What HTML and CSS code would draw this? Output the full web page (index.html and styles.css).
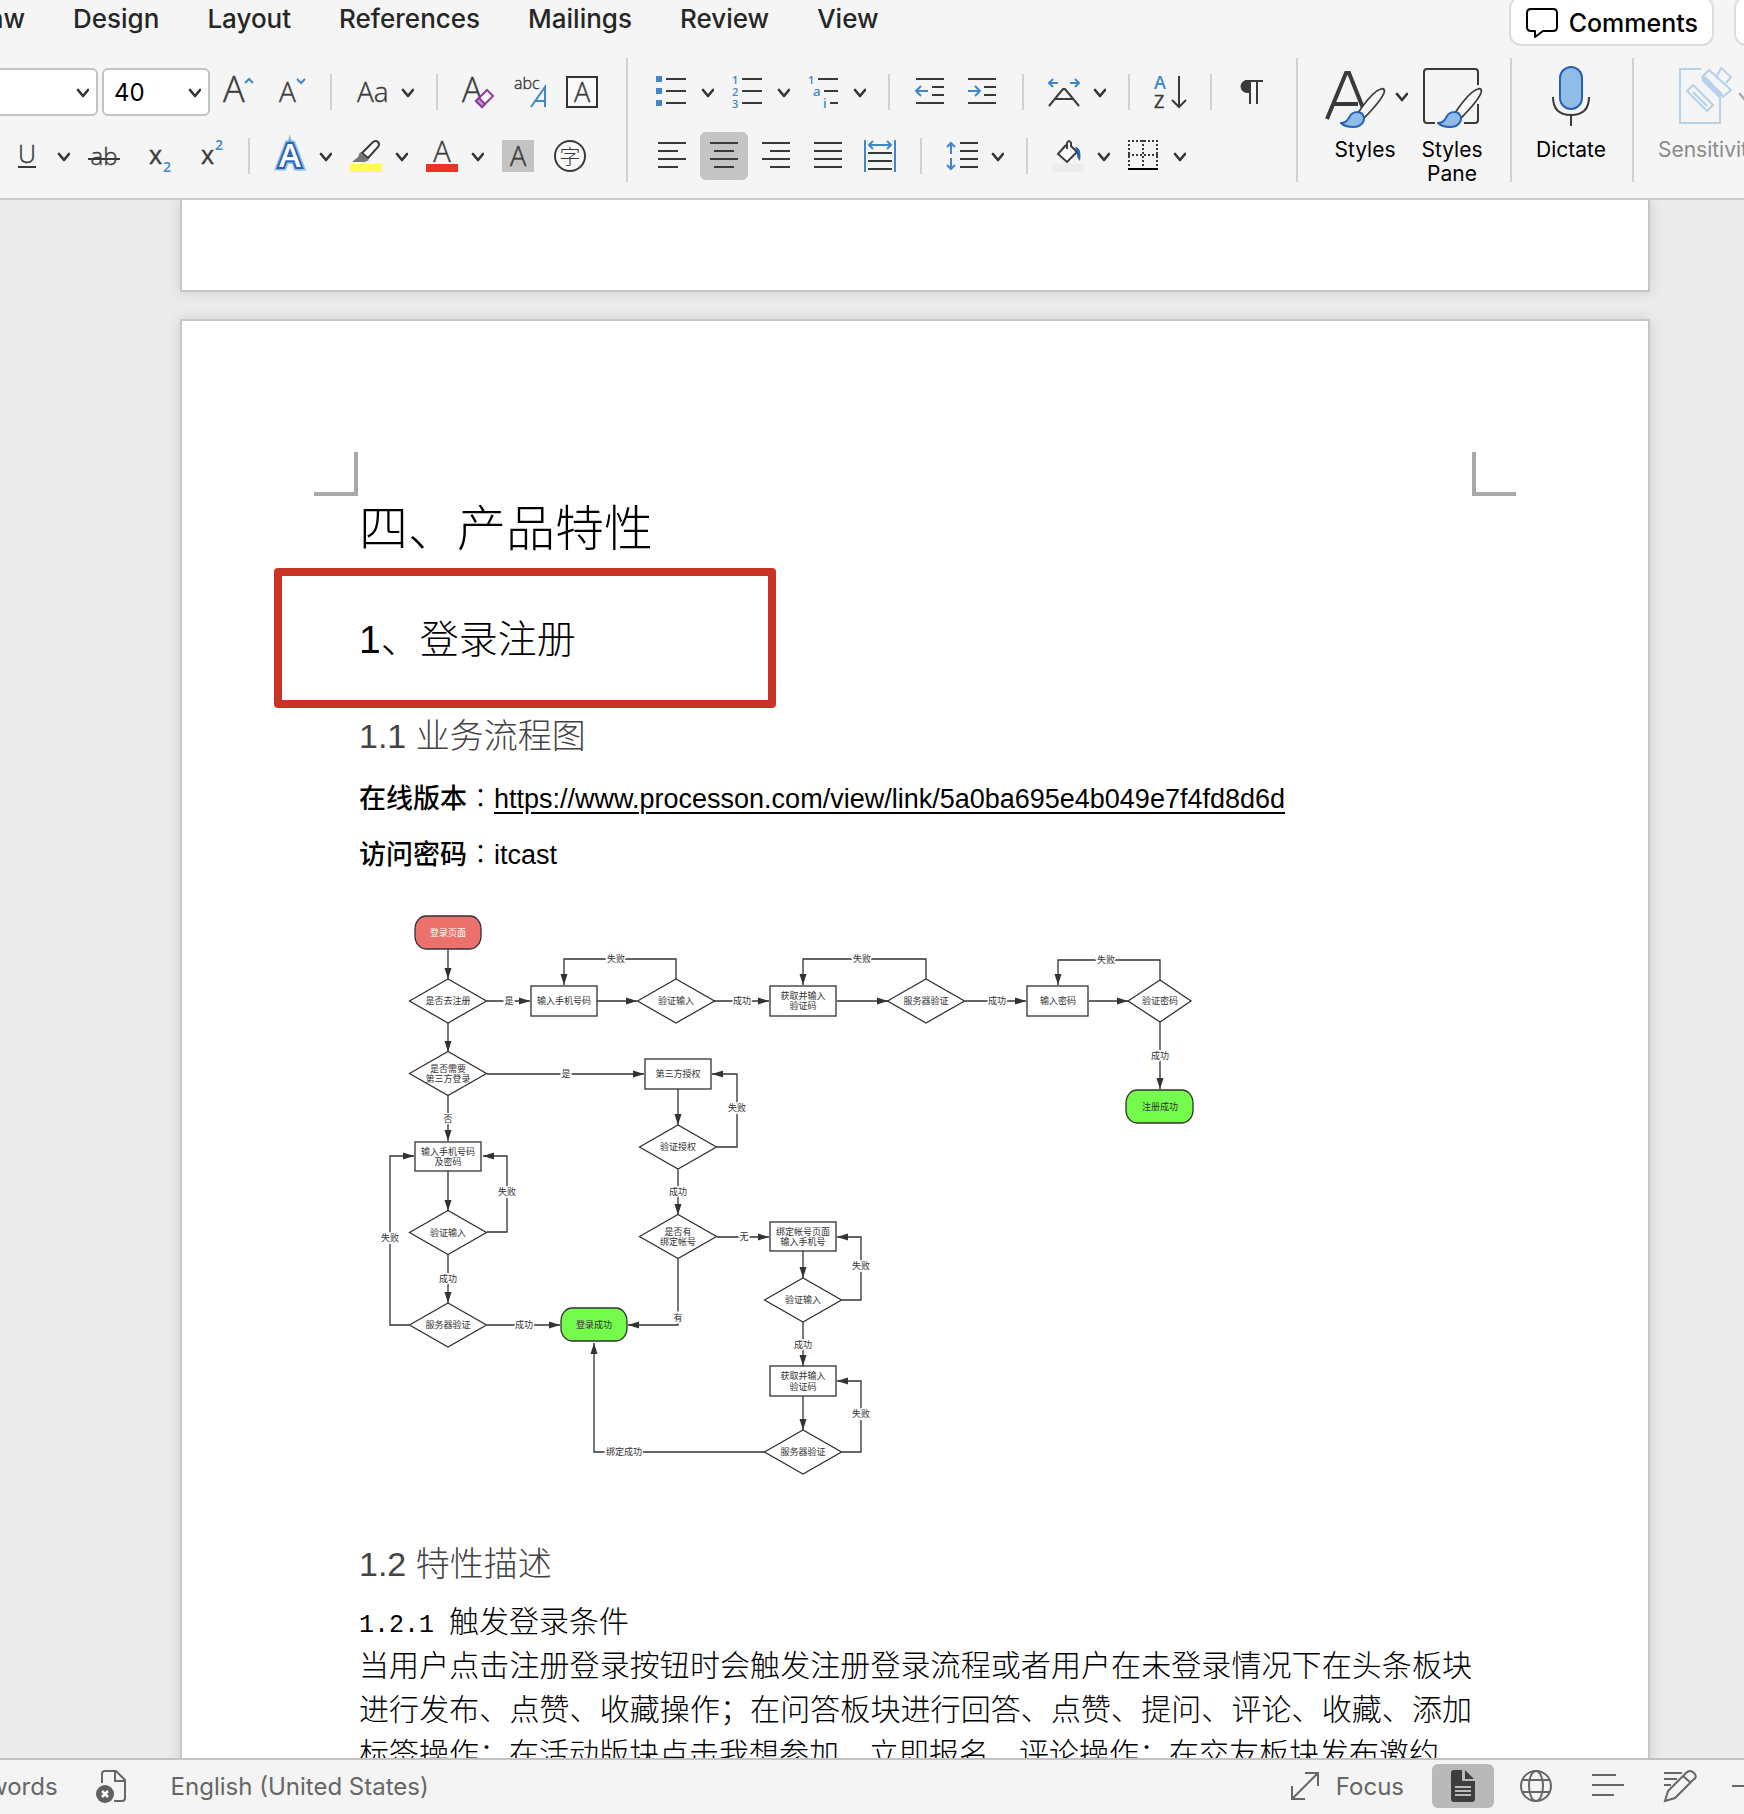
FILE: index.html
```
<!DOCTYPE html>
<html lang="en">

<head>
    <meta charset="UTF-8">
    <meta name="viewport" content="width=device-width, initial-scale=1.0">
    <title>Document</title>
    <link rel="stylesheet" href="styles.css">
</head>

<body>
    <!-- shared shapes -->
    <svg class="defs" width="0" height="0" aria-hidden="true">
        <symbol id="chevron" viewBox="0 0 18 32">
            <path d="M7 14l5 6 5-6" fill="none" stroke="currentColor" stroke-width="2.6" stroke-linecap="round" stroke-linejoin="round" />
        </symbol>
        <symbol id="brush" viewBox="0 0 46 42">
            <path d="M18 26C26 14 34 4 41 2c3-1 4 1 3 4-3 7-12 17-20 25z" fill="#fafafa" stroke="#3a3a3a" stroke-width="1.8" />
            <path d="M1 36c6 0 7-4 9-7 3-5 10-5 13-1 3 5-1 12-10 12-5 0-9-1-12-4z" fill="#90bce9" stroke="#2862b0" stroke-width="2" />
        </symbol>
    </svg>

    <header class="ribbon">
        <div class="tab-row">
            <nav class="tabs">
                <a href="#">Draw</a>
                <a href="#">Design</a>
                <a href="#">Layout</a>
                <a href="#">References</a>
                <a href="#">Mailings</a>
                <a href="#">Review</a>
                <a href="#">View</a>
            </nav>
            <div class="tab-actions">
                <button class="pill">
                    <svg width="34" height="32" viewBox="0 0 34 32" fill="none" stroke="#000" stroke-width="2" stroke-linejoin="round">
                        <path d="M6 2h22q4 0 4 4v14q0 4-4 4H18l-8 6v-6H6q-4 0-4-4V6q0-4 4-4z" />
                    </svg>
                    Comments
                </button>
                <button class="pill" aria-label="Share"></button>
            </div>
        </div>

        <div class="tools">
            <div class="group font-group">
                <div class="row">
                    <div class="combos">
                        <span class="combo font-name">
                            <select aria-label="Font"><option></option></select>
                            <svg width="18" height="32"><use href="#chevron" /></svg>
                        </span>
                        <span class="combo font-size">
                            <select aria-label="Font size"><option>40</option></select>
                            <svg width="18" height="32"><use href="#chevron" /></svg>
                        </span>
                    </div>
                    <button class="icon" aria-label="Increase font size"><svg width="32" height="32">
                        <text x="1" y="26" font-size="36" class="thin">A</text>
                        <path d="M23 7l4-4 4 4" class="blue" />
                    </svg></button>
                    <button class="icon" aria-label="Decrease font size"><svg width="32" height="32">
                        <text x="5" y="26" font-size="28" class="thin">A</text>
                        <path d="M23 3l4 4 4-4" class="blue" />
                    </svg></button>
                    <i class="sep"></i>
                    <div class="split">
                        <button class="icon" aria-label="Change case"><svg width="32" height="32">
                            <text x="1" y="26" font-size="28" class="thin">Aa</text>
                        </svg></button>
                        <button class="drop" aria-label="Change case options"><svg width="18" height="32"><use href="#chevron" /></svg></button>
                    </div>
                    <i class="sep"></i>
                    <button class="icon" aria-label="Clear formatting"><svg width="32" height="32">
                        <text x="0" y="26" font-size="34" class="thin">A</text>
                        <path d="M25 14l6 6-11 11-6-6z" fill="#fff" stroke="#8e3aa0" stroke-width="2" />
                        <path d="M17 22l6 6-3 3-6-6z" fill="#c99ad3" stroke="#8e3aa0" stroke-width="2" />
                    </svg></button>
                    <button class="icon" aria-label="Phonetic guide"><svg width="32" height="32">
                        <text x="0" y="13" font-size="16" class="thin">abc</text>
                        <path d="M17 31L31 11V31M21 25H31" class="blue" />
                    </svg></button>
                    <button class="icon" aria-label="Character border"><svg width="32" height="32">
                        <rect x="1" y="1" width="30" height="30" fill="#fafafa" stroke="#333" stroke-width="2" />
                        <text x="16" y="26" font-size="27" text-anchor="middle" class="thin">A</text>
                    </svg></button>
                </div>
                <div class="row">
                    <div class="split underline">
                        <button class="icon" aria-label="Underline"><svg width="32" height="32">
                            <text x="15" y="23" font-size="25" text-anchor="middle" class="thin">U</text>
                            <path d="M6 27H24" class="dark" />
                        </svg></button>
                        <button class="drop" aria-label="Underline options"><svg width="18" height="32"><use href="#chevron" /></svg></button>
                    </div>
                    <button class="icon" aria-label="Strikethrough"><svg width="32" height="32">
                        <text x="16" y="25" font-size="24" text-anchor="middle" class="thin">ab</text>
                        <path d="M0 19H32" class="dark" />
                    </svg></button>
                    <button class="icon" aria-label="Subscript"><svg width="32" height="32">
                        <text x="9" y="24" font-size="25" class="medium">x</text>
                        <text x="23" y="32" font-size="14" class="blue-text">2</text>
                    </svg></button>
                    <button class="icon" aria-label="Superscript"><svg width="32" height="32">
                        <text x="9" y="24" font-size="25" class="medium">x</text>
                        <text x="23" y="10" font-size="14" class="blue-text">2</text>
                    </svg></button>
                    <i class="sep"></i>
                    <div class="split">
                        <button class="icon" aria-label="Text effects"><svg width="32" height="32">
                            <text x="16" y="27" font-size="33" text-anchor="middle" class="glow-outer">A</text>
                            <text x="16" y="27" font-size="33" text-anchor="middle" class="glow-inner">A</text>
                        </svg></button>
                        <button class="drop" aria-label="Text effect options"><svg width="18" height="32"><use href="#chevron" /></svg></button>
                    </div>
                    <div class="split">
                        <button class="icon" aria-label="Highlight"><svg width="32" height="32">
                            <rect y="24" width="32" height="8" fill="#fffb54" />
                            <path d="M12 13L23 2q3-2 5 0 2 2 0 5L18 18z" fill="#fff" class="dark" />
                            <path d="M10 12l9 8-4 2H2l6-5z" fill="#777" />
                        </svg></button>
                        <button class="drop" aria-label="Highlight colours"><svg width="18" height="32"><use href="#chevron" /></svg></button>
                    </div>
                    <div class="split">
                        <button class="icon" aria-label="Font color"><svg width="32" height="32">
                            <text x="16" y="22" font-size="29" text-anchor="middle" class="thin">A</text>
                            <rect y="24" width="32" height="8" fill="#ea3323" />
                        </svg></button>
                        <button class="drop" aria-label="Font colours"><svg width="18" height="32"><use href="#chevron" /></svg></button>
                    </div>
                    <button class="icon" aria-label="Character shading"><svg width="32" height="32">
                        <rect width="32" height="32" fill="#c4c3c2" />
                        <text x="16" y="26" font-size="27" text-anchor="middle" class="thin">A</text>
                    </svg></button>
                    <button class="icon" aria-label="Enclose characters"><svg width="32" height="32">
                        <circle cx="16" cy="16" r="15" fill="#fafafa" class="dark" />
                        <text x="16" y="24" font-size="21" text-anchor="middle" class="cjk">字</text>
                    </svg></button>
                </div>
            </div>

            <div class="group">
                <div class="row">
                    <div class="split">
                        <button class="icon" aria-label="Bullets"><svg width="32" height="32">
                            <path d="M0 0h6v6H0zM0 12h6v6H0zM0 24h6v6H0z" fill="#3f87cb" />
                            <path d="M10 3H30M10 15H30M10 27H30" class="dark" />
                        </svg></button>
                        <button class="drop" aria-label="Bullet options"><svg width="18" height="32"><use href="#chevron" /></svg></button>
                    </div>
                    <div class="split">
                        <button class="icon" aria-label="Numbering"><svg width="32" height="32">
                            <g font-size="11" class="blue-text"><text x="0" y="8">1</text><text x="0" y="20">2</text><text x="0" y="32">3</text></g>
                            <path d="M10 3H30M10 15H30M10 27H30" class="dark" />
                        </svg></button>
                        <button class="drop" aria-label="Numbering options"><svg width="18" height="32"><use href="#chevron" /></svg></button>
                    </div>
                    <div class="split">
                        <button class="icon" aria-label="Multilevel list"><svg width="32" height="32">
                            <g font-size="11" class="blue-text"><text x="0" y="8">1</text><text x="5" y="20" font-size="13">a</text><text x="15" y="32" font-size="13">i</text></g>
                            <path d="M10 3H30M16 15H30M22 27H30" class="dark" />
                        </svg></button>
                        <button class="drop" aria-label="Multilevel options"><svg width="18" height="32"><use href="#chevron" /></svg></button>
                    </div>
                    <i class="sep"></i>
                    <button class="icon" aria-label="Decrease indent"><svg width="32" height="32">
                        <path d="M2 3H30M18 11H30M18 19H30M2 27H30" class="dark" />
                        <path d="M14 15H3M7 10l-5 5 5 5" class="blue" />
                    </svg></button>
                    <button class="icon" aria-label="Increase indent"><svg width="32" height="32">
                        <path d="M2 3H30M18 11H30M18 19H30M2 27H30" class="dark" />
                        <path d="M2 15H13M9 10l5 5-5 5" class="blue" />
                    </svg></button>
                    <i class="sep"></i>
                    <div class="split">
                        <button class="icon" aria-label="Asian layout"><svg width="32" height="32">
                            <path d="M10 7H1M5 3L1 7l4 4M22 7h9M27 3l4 4-4 4" class="blue" />
                            <path d="M1 30L15 13h2L31 30M7 23H25" class="dark" />
                        </svg></button>
                        <button class="drop" aria-label="Asian layout options"><svg width="18" height="32"><use href="#chevron" /></svg></button>
                    </div>
                    <i class="sep"></i>
                    <button class="icon" aria-label="Sort"><svg width="32" height="32">
                        <text x="0" y="13" font-size="18" class="blue-text">A</text>
                        <text x="0" y="32" font-size="18" class="medium">Z</text>
                        <path d="M25 0V31M18 24l7 7 7-7" class="dark" />
                    </svg></button>
                    <i class="sep"></i>
                    <button class="icon" aria-label="Show marks"><svg width="32" height="32">
                        <path d="M13 4H11a6 6 0 0 0 0 13h2z" fill="#3a3a3a" />
                        <path d="M9 5H27M14 5V28M21 5V28" class="dark" />
                    </svg></button>
                </div>
                <div class="row">
                    <button class="icon" aria-label="Align left"><svg width="32" height="32">
                        <path d="M2 3H30M2 11H22M2 19H30M2 27H22" class="dark" />
                    </svg></button>
                    <button class="icon active" aria-label="Center"><svg width="32" height="32">
                        <path d="M2 3H30M6 11H26M2 19H30M6 27H26" class="dark" />
                    </svg></button>
                    <button class="icon" aria-label="Align right"><svg width="32" height="32">
                        <path d="M2 3H30M10 11H30M2 19H30M10 27H30" class="dark" />
                    </svg></button>
                    <button class="icon" aria-label="Justify"><svg width="32" height="32">
                        <path d="M2 3H30M2 11H30M2 19H30M2 27H30" class="dark" />
                    </svg></button>
                    <button class="icon" aria-label="Distribute"><svg width="32" height="32">
                        <path d="M1 0V32M31 0V32M5 5H27M9 1L5 5l4 4M23 1l4 4-4 4" class="blue" />
                        <path d="M4 13H28M4 21H28M4 29H28" class="dark" />
                    </svg></button>
                    <i class="sep"></i>
                    <div class="split">
                        <button class="icon" aria-label="Line spacing"><svg width="32" height="32">
                            <path d="M5 14V3M1 7l4-4 4 4M5 18V29M1 25l4 4 4-4" class="blue" />
                            <path d="M14 3H32M14 11H32M14 19H32M14 27H32" class="dark" />
                        </svg></button>
                        <button class="drop" aria-label="Line spacing options"><svg width="18" height="32"><use href="#chevron" /></svg></button>
                    </div>
                    <i class="sep"></i>
                    <div class="split">
                        <button class="icon" aria-label="Shading"><svg width="32" height="32">
                            <rect y="24" width="32" height="8" fill="#ececec" />
                            <path d="M14 5L6 14l9 8 10-10L19 6V3q-2-4-4 0v6" fill="#fff" class="dark" />
                            <path d="M23 7q7 0 5 14-4-4-3-9z" fill="#2862b0" />
                        </svg></button>
                        <button class="drop" aria-label="Shading options"><svg width="18" height="32"><use href="#chevron" /></svg></button>
                    </div>
                    <div class="split">
                        <button class="icon" aria-label="Borders"><svg width="32" height="32">
                            <path d="M0 1H30M1 0V26M29 0V26M15 0V26M0 15H30" stroke-dasharray="2 2" fill="none" stroke="#3a3a3a" stroke-width="2" />
                            <path d="M0 29H30" stroke="#000" stroke-width="2" />
                        </svg></button>
                        <button class="drop" aria-label="Border options"><svg width="18" height="32"><use href="#chevron" /></svg></button>
                    </div>
                </div>
            </div>

            <div class="group large">
                <button class="big">
                    <span class="big-icon">
                        <svg width="66" height="64">
                            <path d="M5 55L24 9h3L43 49M12 40H36" fill="none" stroke="#3a3a3a" stroke-width="4" />
                            <use href="#brush" x="18" y="23" width="46" height="42" />
                        </svg>
                        <svg width="18" height="32"><use href="#chevron" /></svg>
                    </span>
                    Styles
                </button>
                <button class="big">
                    <span class="big-icon">
                        <svg width="64" height="64">
                            <path d="M15 59H7q-3 0-3-3V8q0-3 3-3H55q3 0 3 3V21M58 40V56q0 3-3 3H44" fill="none" class="dark" />
                            <use href="#brush" x="17" y="23" width="46" height="42" />
                        </svg>
                    </span>
                    Styles<br>Pane
                </button>
            </div>

            <div class="group large">
                <button class="big">
                    <span class="big-icon">
                        <svg width="64" height="64">
                            <rect x="21" y="3" width="22" height="42" rx="11" fill="#90bce9" stroke="#2862b0" stroke-width="2" />
                            <path d="M14 33q0 18 18 18t18-18M32 51V62" class="dark" />
                        </svg>
                    </span>
                    Dictate
                </button>
            </div>

            <div class="group large disabled">
                <button class="big" disabled>
                    <span class="big-icon">
                        <svg width="64" height="64" fill="none" stroke="#b5d2ea" stroke-width="2">
                            <path d="M34 5H13V59H53V33" />
                            <path d="M20 27l6-6 20 20-6 6z M26 28l14 14" />
                            <path d="M35 13l7-7 22 20-8 7zM50 12l4-8 10 9-5 6" />
                            <path d="M36 14L54 32" stroke-width="6" />
                        </svg>
                        <svg width="18" height="32"><use href="#chevron" /></svg>
                    </span>
                    Sensitivity
                </button>
            </div>
        </div>
    </header>

    <main class="workspace">
        <div class="page previous"></div>
        <article class="page" lang="zh-CN">
            <i class="corner left"></i>
            <i class="corner right"></i>

            <h1>四、产品特性</h1>
            <h2>1、登录注册<span class="mark"></span></h2>
            <h3>1.1 业务流程图</h3>
            <p class="note"><b>在线版本</b><span lang="zh-TW">：</span><a href="#">https://www.processon.com/view/link/5a0ba695e4b049e7f4fd8d6d</a></p>
            <p class="note"><b>访问密码</b><span lang="zh-TW">：</span>itcast</p>

            <svg class="flowchart" width="860" height="592" viewBox="0 0 860 592">
                <defs>
                    <marker id="arrow" viewBox="0 0 11 8" refX="11" refY="4" markerWidth="11" markerHeight="8" markerUnits="userSpaceOnUse" orient="auto">
                        <path d="M0 0.5L11 4L0 7.5z" fill="#323232" />
                    </marker>
                </defs>

                <!-- connectors -->
                <g class="edges">
                    <path d="M89 49V79" />
                    <path d="M128 101H171" />
                    <path d="M238 101H278" />
                    <path d="M317 79V59H205V85" />
                    <path d="M355 101H410" />
                    <path d="M478 101H529" />
                    <path d="M567 79V59H444V85" />
                    <path d="M606 101H667" />
                    <path d="M730 101H769" />
                    <path d="M801 80V60H699V85" />
                    <path d="M801 122V189" />
                    <path d="M89 122V152" />
                    <path d="M128 174H285" />
                    <path d="M89 195V241" />
                    <path d="M319 189V225" />
                    <path d="M358 247H378V174H353" />
                    <path d="M89 271V311" />
                    <path d="M128 332H148V256H124" />
                    <path d="M89 354V403" />
                    <path d="M50 425H31V256H55" />
                    <path d="M128 425H201" />
                    <path d="M319 269V315" />
                    <path d="M358 337H410" />
                    <path d="M319 359V425H269" />
                    <path d="M444 351V378" />
                    <path d="M483 400H502V337H478" />
                    <path d="M444 422V466" />
                    <path d="M444 496V530" />
                    <path d="M483 552H502V481H478" />
                    <path d="M406 552H235V443" />
                </g>

                <g class="edge-labels">
                    <text x="150" y="104">是</text>
                    <text x="257" y="62">失败</text>
                    <text x="383" y="104">成功</text>
                    <text x="503" y="62">失败</text>
                    <text x="638" y="104">成功</text>
                    <text x="747" y="63">失败</text>
                    <text x="801" y="159">成功</text>
                    <text x="207" y="177">是</text>
                    <text x="89" y="222">否</text>
                    <text x="378" y="211">失败</text>
                    <text x="148" y="295">失败</text>
                    <text x="89" y="382">成功</text>
                    <text x="31" y="341">失败</text>
                    <text x="165" y="428">成功</text>
                    <text x="319" y="295">成功</text>
                    <text x="385" y="340">无</text>
                    <text x="319" y="421">有</text>
                    <text x="502" y="369">失败</text>
                    <text x="444" y="448">成功</text>
                    <text x="502" y="517">失败</text>
                    <text x="265" y="555">绑定成功</text>
                </g>

                <!-- nodes -->
                <g class="nodes">
                    <rect x="56" y="16" width="66" height="33" rx="11" ry="13" fill="#ec706b" />
                    <rect x="767" y="190" width="67" height="33" rx="11" ry="13" fill="#75fb4c" />
                    <rect x="202" y="408" width="66" height="33" rx="11" ry="13" fill="#75fb4c" />
                    <rect x="172" y="86" width="66" height="30" />
                    <rect x="411" y="86" width="66" height="30" />
                    <rect x="668" y="86" width="61" height="30" />
                    <rect x="286" y="159" width="66" height="30" />
                    <rect x="56" y="242" width="66" height="29" />
                    <rect x="411" y="322" width="66" height="29" />
                    <rect x="411" y="466" width="66" height="30" />
                    <path d="M50.500 101L89 79l38.500 22L89 123z" />
                    <path d="M278.500 101L317 79l38.500 22L317 123z" />
                    <path d="M528.500 101L567 79l38.500 22L567 123z" />
                    <path d="M769 101L801 80l31 21L801 122z" />
                    <path d="M50.500 173.500L89 151.500l38.500 22L89 195.500z" />
                    <path d="M280.500 247L319 225l38.500 22L319 269z" />
                    <path d="M50.500 332.500L89 310.500l38.500 22L89 354.500z" />
                    <path d="M50.500 425L89 403l38.500 22L89 447z" />
                    <path d="M280.500 336.500L319 314.500l38.500 22L319 358.500z" />
                    <path d="M405.500 400L444 378l38.500 22L444 422z" />
                    <path d="M405.500 552L444 530l38.500 22L444 574z" />
                </g>

                <g class="node-labels">
                    <text x="89" y="36" fill="#fff">登录页面</text>
                    <text x="801" y="210">注册成功</text>
                    <text x="235" y="428">登录成功</text>
                    <text x="89" y="104">是否去注册</text>
                    <text x="205" y="104">输入手机号码</text>
                    <text x="317" y="104">验证输入</text>
                    <text x="444" y="99">获取并输入</text>
                    <text x="444" y="109">验证码</text>
                    <text x="567" y="104">服务器验证</text>
                    <text x="699" y="104">输入密码</text>
                    <text x="801" y="104">验证密码</text>
                    <text x="89" y="172">是否需要</text>
                    <text x="89" y="182">第三方登录</text>
                    <text x="319" y="177">第三方授权</text>
                    <text x="319" y="250">验证授权</text>
                    <text x="89" y="255">输入手机号码</text>
                    <text x="89" y="265">及密码</text>
                    <text x="89" y="336">验证输入</text>
                    <text x="89" y="428">服务器验证</text>
                    <text x="319" y="335">是否有</text>
                    <text x="319" y="345">绑定帐号</text>
                    <text x="444" y="335">绑定帐号页面</text>
                    <text x="444" y="345">输入手机号</text>
                    <text x="444" y="403">验证输入</text>
                    <text x="444" y="479">获取并输入</text>
                    <text x="444" y="490">验证码</text>
                    <text x="444" y="555">服务器验证</text>
                </g>
            </svg>

            <h3>1.2 特性描述</h3>
            <h4><span class="number">1.2.1 </span>触发登录条件</h4>
            <p class="body-text">当用户点击注册登录按钮时会触发注册登录流程或者用户在未登录情况下在头条板块进行发布、点赞、收藏操作；在问答板块进行回答、点赞、提问、评论、收藏、添加标签操作；在活动版块点击我想参加、立即报名、评论操作；在交友板块发布邀约、</p>
        </article>
    </main>

    <footer class="status">
        <span class="words">words</span>
        <button class="status-icon proof" aria-label="Proofing"><svg width="32" height="34" viewBox="0 0 32 34">
            <path d="M7 14V5q0-3 3-3h11l9 9v18q0 3-3 3h-8M20 2v10h10" fill="none" stroke="#666" stroke-width="2" />
            <circle cx="10" cy="25" r="9" fill="#5f5f5f" />
            <path d="M7 22l6 6M13 22l-6 6" stroke="#fff" stroke-width="2.500" />
        </svg></button>
        <button class="language">English (United States)</button>

        <div class="views">
            <button class="focus">
                <svg width="30" height="30" viewBox="0 0 30 30" fill="none" stroke="#666" stroke-width="2">
                    <path d="M2 28L28 2M15 2H28V15M2 15V28H15" />
                </svg>
                Focus
            </button>
            <button class="view-button active" aria-label="Print layout"><svg width="32" height="32">
                <path d="M4 3q0-3 3-3h8v11h13v18q0 3-3 3H7q-3 0-3-3z" fill="#3e3e3e" />
                <path d="M18 0l9 9h-9z" fill="#3e3e3e" />
                <path d="M8 17H24M8 21H24M8 25H24" stroke="#bbb" stroke-width="2" />
            </svg></button>
            <button class="status-icon" aria-label="Web layout"><svg width="32" height="32" fill="none" stroke="#666" stroke-width="2">
                <circle cx="16" cy="16" r="15" />
                <ellipse cx="16" cy="16" rx="7" ry="15" />
                <path d="M3 10H29M3 22H29" />
            </svg></button>
            <button class="status-icon" aria-label="Outline"><svg width="32" height="32" fill="none" stroke="#666" stroke-width="2">
                <path d="M0 5H24M0 15H32M0 25H22" />
            </svg></button>
            <button class="status-icon" aria-label="Draft"><svg width="32" height="32" fill="none" stroke="#666" stroke-width="2">
                <path d="M0 3H18M0 9H13M0 15H7" />
                <path d="M1 31l3-10L22 3q4-4 8 0t-1 7L11 28zM19 6l8 7" />
            </svg></button>
            <button class="status-icon" aria-label="Zoom out"><svg width="32" height="32" fill="none" stroke="#666" stroke-width="2">
                <path d="M-4 16H20" />
            </svg></button>
        </div>
    </footer>
</body>

</html>
```
FILE: styles.css
```
* {
    box-sizing: border-box;
}

body {
    margin: 0;
    height: 100vh;
    display: flex;
    flex-direction: column;
    overflow: hidden;
    background-color: #ebebeb;
    font-family: Inter, "Noto Sans CJK SC", sans-serif;
    color: #000;
}

button {
    margin: 0;
    padding: 0;
    border: none;
    background: none;
    color: inherit;
    font-family: inherit;
    cursor: pointer;
}

svg {
    display: block;
    flex-shrink: 0;
    overflow: visible;
}

.defs {
    position: absolute;
}

/* Ribbon */
.ribbon {
    flex-shrink: 0;
    background-color: #f5f5f5;
    border-bottom: 2px solid #cbcbcb;
    overflow: hidden;
}

.tab-row {
    display: flex;
    justify-content: space-between;
    height: 58px;
}

.tabs {
    display: flex;
    gap: 48px;
    margin-left: -40px;
    line-height: 38px;
}

.tabs a {
    color: #262626;
    font-size: 26px;
    font-weight: 500;
    text-decoration: none;
}

.tab-actions {
    display: flex;
    gap: 20px;
    margin-right: -32px;
}

.pill {
    display: flex;
    align-items: center;
    gap: 10px;
    height: 50px;
    min-width: 42px;
    margin-top: -4px;
    padding: 4px 14px 0;
    background-color: #fff;
    border: 2px solid #dcdcdc;
    border-radius: 12px;
    font-size: 25px;
    font-weight: 500;
}

.tools {
    display: flex;
    height: 140px;
    padding-bottom: 16px;
}

.group {
    display: flex;
    flex-direction: column;
    flex-shrink: 0;
    gap: 16px;
    padding: 10px 28px 0;
    border-right: 2px solid #d2d2d2;
}

.font-group {
    padding-left: 0;
}

.row {
    display: flex;
    align-items: center;
    gap: 20px;
    height: 48px;
}

.icon {
    width: 32px;
    height: 32px;
    flex-shrink: 0;
}

.icon.active {
    width: 48px;
    height: 48px;
    margin: 0 -8px;
    padding: 8px;
    background-color: #c4c4c4;
    border-radius: 6px;
}

.split {
    display: flex;
    gap: 8px;
    margin-right: -2px;
}

.underline {
    margin-left: 12px;
}

.drop {
    width: 18px;
    height: 32px;
    color: #333;
}

.sep {
    width: 2px;
    height: 36px;
    margin: 0 4px;
    background-color: #d2d2d2;
}

.combos {
    display: flex;
    gap: 4px;
    margin: 0 -8px 0 -20px;
}

.combo {
    display: flex;
    align-items: center;
    height: 48px;
    background-color: #fff;
    border: 2px solid #c2c2c2;
    border-radius: 6px;
    color: #333;
}

.font-name {
    width: 118px;
}

.font-size {
    width: 108px;
}

.combo select {
    flex: 1;
    min-width: 0;
    height: 100%;
    padding: 0 0 0 10px;
    border: none;
    background: none;
    appearance: none;
    font-family: inherit;
    font-size: 24px;
    color: #000;
}

.combo svg {
    margin-right: 7px;
}

.thin {
    font-family: "Open Sans", sans-serif;
    font-weight: 300;
    fill: #3a3a3a;
    stroke: #3a3a3a;
    stroke-width: 0.4px;
}

.medium {
    font-family: "Open Sans", sans-serif;
    fill: #3a3a3a;
    stroke: #3a3a3a;
    stroke-width: 0.4px;
}

.blue-text {
    font-family: "Open Sans", sans-serif;
    font-weight: 600;
    fill: #3f87cb;
}

.cjk {
    font-family: "Noto Sans CJK SC", sans-serif;
    font-weight: 300;
    fill: #3a3a3a;
}

.glow-outer,
.glow-inner {
    font-family: "Open Sans", sans-serif;
    font-weight: 600;
    fill: #fff;
    stroke: #90bce9;
    stroke-width: 7px;
}

.glow-inner {
    stroke: #2862b0;
    stroke-width: 4px;
    paint-order: stroke;
}

.dark {
    stroke: #3a3a3a;
    stroke-width: 2px;
}

.blue {
    stroke: #3f87cb;
    stroke-width: 2px;
}

.dark:not([fill]),
.blue {
    fill: none;
}

.group.large {
    flex-direction: row;
    align-items: flex-start;
    gap: 12px;
    padding: 6px 26px 0 24px;
}

.big {
    font-size: 21px;
    line-height: 24px;
}

.big-icon {
    display: flex;
    align-items: center;
    justify-content: center;
    gap: 2px;
    margin-bottom: 10px;
    color: #333;
}

.disabled {
    border-right: none;
}

.disabled .big {
    color: #8a8a8a;
}

.disabled .big-icon {
    color: #aaa;
}

/* Document */
.workspace {
    flex: 1;
    min-height: 0;
    overflow: hidden;
    padding: 0 94px 0 180px;
}

.page {
    position: relative;
    margin-bottom: 27px;
    padding: 176px 176px 120px 177px;
    background-color: #fff;
    border: 2px solid #c6c6c6;
    box-shadow: 0 0 12px rgba(0, 0, 0, 0.12);
}

.previous {
    height: 92px;
    padding: 0;
    border-top: none;
}

.corner {
    position: absolute;
    top: 131px;
    width: 44px;
    height: 44px;
    border-bottom: 4px solid #a9a9a9;
}

.corner.left {
    left: 132px;
    border-right: 4px solid #a9a9a9;
}

.corner.right {
    right: 132px;
    border-left: 4px solid #a9a9a9;
}

h1,
h2,
h3,
h4,
p {
    margin: 0;
    font-family: "Liberation Sans", "Noto Sans CJK SC", sans-serif;
    font-weight: 300;
}

h1 {
    font-size: 49px;
    line-height: 64px;
}

h2 {
    position: relative;
    margin-top: 55px;
    font-size: 39px;
    line-height: 48px;
}

/* red frame drawn over the section title */
.mark {
    position: absolute;
    top: -48px;
    left: -85px;
    width: 502px;
    height: 140px;
    border: 8px solid #c93525;
    border-radius: 4px;
}

h3 {
    margin-top: 50px;
    color: #444;
    font-size: 34px;
    line-height: 44px;
}

h3 + .note {
    margin-top: 13px;
}

.note {
    font-size: 27px;
    font-weight: 400;
    line-height: 56px;
}

.note b {
    font-weight: 500;
}

.note span {
    font-family: "Noto Sans CJK TC", sans-serif;
    font-weight: 300;
    line-height: 1;
}

.note a {
    color: #000;
    text-underline-offset: 4px;
}

.flowchart {
    margin-top: 17px;
    max-width: 100%;
    font-family: "Noto Sans CJK SC", sans-serif;
    font-size: 9px;
}

.flowchart text {
    text-anchor: middle;
}

.edges path {
    fill: none;
    stroke: #323232;
    stroke-width: 1.3px;
    marker-end: url(#arrow);
}

.edge-labels text {
    fill: #323232;
    stroke: #fff;
    stroke-width: 3px;
    paint-order: stroke;
}

.nodes rect,
.nodes path {
    stroke: #323232;
    stroke-width: 1.3px;
}

.nodes rect:not([fill]),
.nodes path {
    fill: #fff;
}

.node-labels text:not([fill]) {
    fill: #323232;
}

h4 {
    margin-top: 14px;
    font-size: 30px;
    line-height: 44px;
}

.number {
    font-family: "Liberation Mono", monospace;
    font-size: 25px;
    line-height: 1;
    white-space: pre;
}

.body-text {
    font-size: 30px;
    line-height: 44px;
    text-align: justify;
}

/* Status bar */
.status {
    display: flex;
    align-items: center;
    flex-shrink: 0;
    height: 56px;
    padding-bottom: 2px;
    border-top: 2px solid #c2c2c2;
    background-color: #f4f4f4;
    color: #666;
    font-size: 24px;
    overflow: hidden;
}

.words {
    margin-left: -12px;
}

.proof {
    margin: 0 44px 0 37px;
}

.language,
.focus {
    font-size: 24px;
}

.views {
    display: flex;
    align-items: center;
    gap: 40px;
    margin: 0 -24px 0 auto;
}

.focus {
    display: flex;
    align-items: center;
    gap: 16px;
    margin-right: -12px;
}

.view-button {
    display: flex;
    align-items: center;
    justify-content: center;
    width: 62px;
    height: 44px;
    margin-right: -14px;
    border-radius: 6px;
}

.view-button.active {
    background-color: #b9b9b9;
}
```
